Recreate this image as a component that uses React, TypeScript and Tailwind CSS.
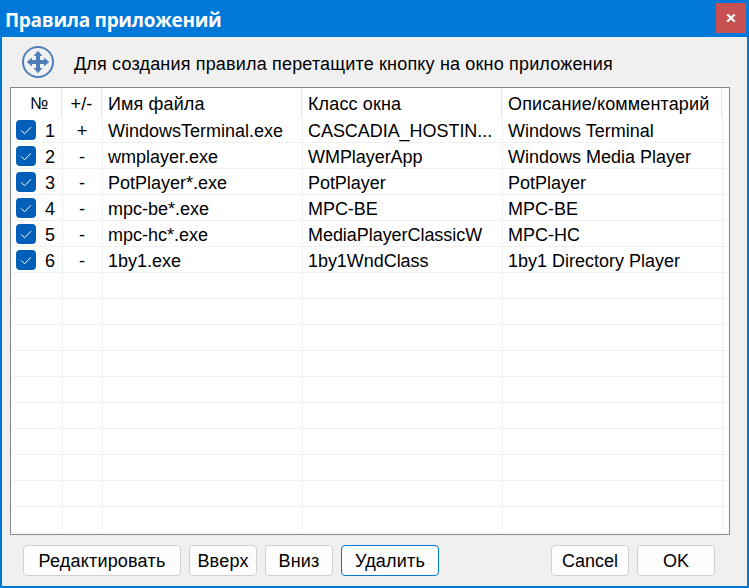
import React from "react";

type Rule = {
  sign: string;
  file: string;
  cls: string;
  note: string;
};

const rules: Rule[] = [
  { sign: "+", file: "WindowsTerminal.exe", cls: "CASCADIA_HOSTIN...", note: "Windows Terminal" },
  { sign: "-", file: "wmplayer.exe", cls: "WMPlayerApp", note: "Windows Media Player" },
  { sign: "-", file: "PotPlayer*.exe", cls: "PotPlayer", note: "PotPlayer" },
  { sign: "-", file: "mpc-be*.exe", cls: "MPC-BE", note: "MPC-BE" },
  { sign: "-", file: "mpc-hc*.exe", cls: "MediaPlayerClassicW", note: "MPC-HC" },
  { sign: "-", file: "1by1.exe", cls: "1by1WndClass", note: "1by1 Directory Player" },
];

const ROW_COUNT = 16;

function Check() {
  return (
    <span className="flex h-5 w-5 shrink-0 items-center justify-center rounded-[4px] bg-[#005fb8]">
      <svg width="20" height="20" viewBox="0 0 20 20" fill="none" stroke="#fff" strokeWidth="1">
        <path d="M5.2 10.4 8.6 13.8 15 7.2" />
      </svg>
    </span>
  );
}

function MoveIcon() {
  return (
    <svg width="32" height="32" viewBox="0 0 32 32" className="shrink-0">
      <circle cx="16" cy="16" r="15" fill="none" stroke="#4f7fb8" strokeWidth="2" />
      <path
        fill="#4f7fb8"
        d="M16 4.8 20.4 10H18V14H22V11.6L27.2 16 22 20.4V18H18V22H20.4L16 27.2 11.6 22H14V18H10V20.4L4.8 16 10 11.6V14H14V10H11.6Z"
      />
    </svg>
  );
}

function Button({ className, children }: { className: string; children: React.ReactNode }) {
  return (
    <button
      className={`flex h-[31px] items-center justify-center whitespace-nowrap rounded-[4px] border bg-[#fdfdfd] ${className}`}
    >
      {children}
    </button>
  );
}

const cell = "flex items-center whitespace-nowrap border-r border-[#f0f0f0]";
const head = "flex items-center whitespace-nowrap border-r border-[#e5e5e5] pt-[2px] tracking-[0.13px]";

export default function App() {
  return (
    <div className="flex h-[588px] w-[749px] flex-col overflow-hidden border-x-2 border-b-2 border-[#0078d7] bg-[#f0f0f0] font-['Liberation_Sans',Arial,sans-serif] text-[18px] leading-[20px] text-black">
      <header className="flex h-[37px] shrink-0 items-start justify-between bg-[#0078d7] pl-[3px] pr-px pt-[3px]">
        <h1 className="pt-[3px] font-['Open_Sans',sans-serif] text-[19px] font-bold leading-[28px] tracking-[-0.3px] text-white">
          Правила приложений
        </h1>
        <button className="flex h-[30px] w-[30px] items-center justify-center bg-[#c75050]">
          <svg width="10" height="8" viewBox="0 0 10 8" stroke="#fff" strokeWidth="2.2">
            <path d="M1.2 0.3 8.8 7.7M8.8 0.3 1.2 7.7" />
          </svg>
        </button>
      </header>

      <div className="flex h-[50px] shrink-0 items-start pl-5 pt-[9px]">
        <MoveIcon />
        <p className="ml-5 mt-2 whitespace-nowrap tracking-[0.17px]">
          Для создания правила перетащите кнопку на окно приложения
        </p>
      </div>

      <main className="ml-2 flex h-[448px] w-[720px] shrink-0 flex-col border border-[#828790] bg-white p-px">
        <div className="flex h-7 shrink-0">
          <div className={`${head} w-[50px] pl-[18px] text-[17px]`}>№</div>
          <div className={`${head} w-10 justify-center`}>+/-</div>
          <div className={`${head} w-[200px] pl-1.5`}>Имя файла</div>
          <div className={`${head} w-[200px] pl-1.5`}>Класс окна</div>
          <div className={`${head} w-[220px] pl-1.5`}>Описание/комментарий</div>
        </div>
        {Array.from({ length: ROW_COUNT }, (_, i) => {
          const r = rules[i];
          return (
            <div key={i} className="flex h-[26px] w-[716px] shrink-0 border-b border-[#f0f0f0]">
              <div className={`${cell} w-[51px] pl-1`}>
                {r && (
                  <>
                    <Check />
                    <span className="ml-[9px] pt-[2px]">{i + 1}</span>
                  </>
                )}
              </div>
              <div className={`${cell} w-10 justify-center pr-px pt-[2px]`}>{r?.sign}</div>
              <div className={`${cell} w-[200px] pl-[5px] pt-[2px]`}>{r?.file}</div>
              <div className={`${cell} w-[200px] pl-[5px] pt-[2px] tracking-[-0.05px]`}>{r?.cls}</div>
              <div className={`${cell} w-[220px] pl-[5px] pt-[2px]`}>{r?.note}</div>
            </div>
          );
        })}
      </main>

      <footer className="flex shrink-0 pl-[21px] pt-[10px]">
        <Button className="w-[158px] border-[#d0d0d0] tracking-[0.2px]">Редактировать</Button>
        <Button className="ml-2 w-[68px] border-[#d0d0d0] tracking-[0.2px]">Вверх</Button>
        <Button className="ml-2 w-[68px] border-[#d0d0d0] tracking-[0.2px]">Вниз</Button>
        <Button className="ml-2 w-[98px] border-[#0078d4] tracking-[0.2px]">Удалить</Button>
        <Button className="ml-[112px] w-[78px] border-[#d0d0d0]">Cancel</Button>
        <Button className="ml-2 w-[78px] border-[#d0d0d0]">OK</Button>
      </footer>
    </div>
  );
}
